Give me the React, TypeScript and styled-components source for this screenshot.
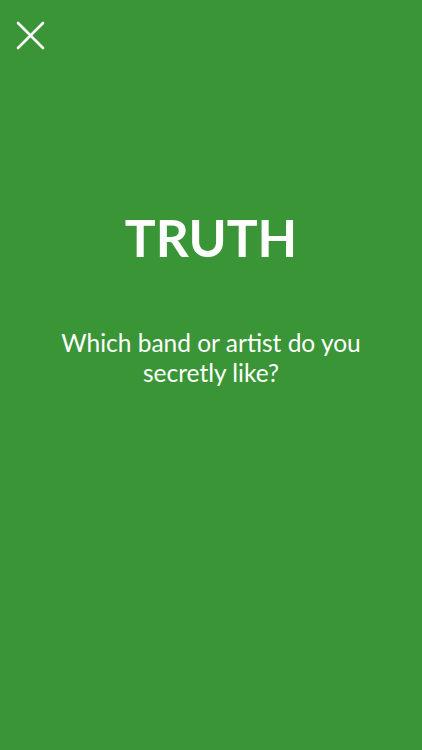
import React from "react";
import styled, { createGlobalStyle } from "styled-components";

const GlobalStyle = createGlobalStyle`
  html, body {
    margin: 0;
    padding: 0;
    background: #3a9537;
  }
  * {
    box-sizing: border-box;
  }
`;

const Screen = styled.div`
  width: 422px;
  height: 750px;
  background: #3a9537;
  display: flex;
  flex-direction: column;
  font-family: Lato, "Open Sans", sans-serif;
  color: #fff;
`;

const TopBar = styled.div`
  display: flex;
  padding: 20px 15px 0;
  height: 60px;
`;

const CloseButton = styled.button`
  width: 31px;
  height: 31px;
  padding: 0;
  border: none;
  background: transparent;
  display: flex;
  align-items: center;
  justify-content: center;
  cursor: pointer;
`;

const Content = styled.div`
  display: flex;
  flex-direction: column;
  align-items: center;
  padding: 146px 40px 0;
`;

const Title = styled.h1`
  margin: 0;
  font-size: 51.5px;
  font-weight: 700;
  line-height: 62px;
`;

const Question = styled.p`
  margin: 60px 0 0;
  font-size: 24.5px;
  font-weight: 400;
  line-height: 30px;
  text-align: center;
`;

export default function App() {
  return (
    <>
      <GlobalStyle />
      <Screen>
        <TopBar>
          <CloseButton aria-label="Close">
            <svg width="31" height="31" viewBox="0 0 31 31">
              <path
                d="M3 3 L28 28 M28 3 L3 28"
                stroke="#fff"
                strokeWidth="2.6"
                strokeLinecap="round"
              />
            </svg>
          </CloseButton>
        </TopBar>
        <Content>
          <Title>TRUTH</Title>
          <Question>Which band or artist do you secretly like?</Question>
        </Content>
      </Screen>
    </>
  );
}
